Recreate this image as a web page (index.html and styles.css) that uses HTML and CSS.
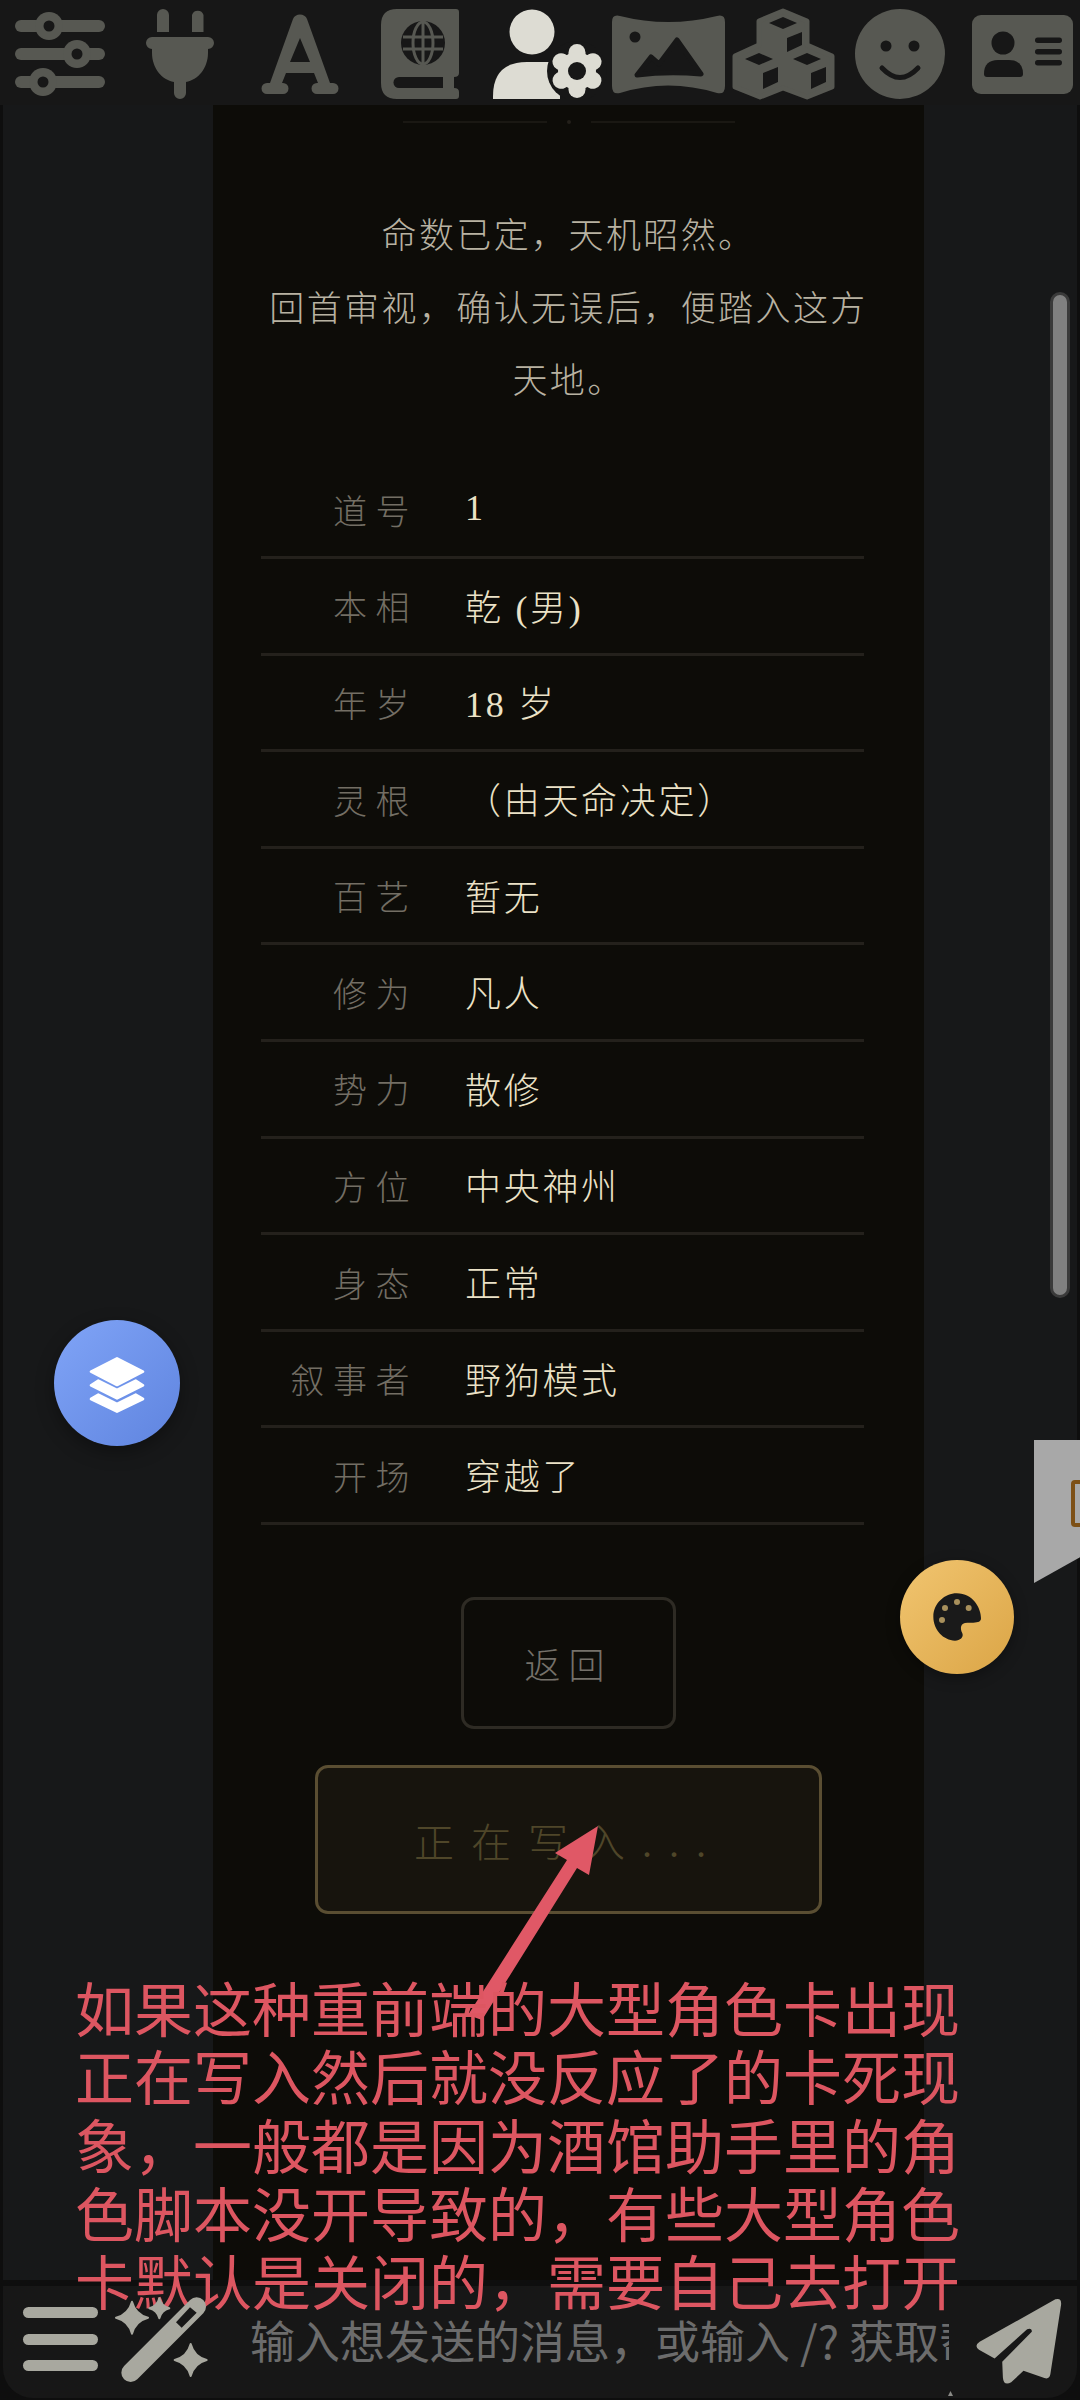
FILE: index.html
```html
<!DOCTYPE html>
<html lang="zh-CN">
<head>
  <meta charset="UTF-8">
  <meta name="viewport" content="width=device-width, initial-scale=1.0">
  <title>确认</title>
  <link rel="stylesheet" href="styles.css">
</head>
<body>
  <div class="app">

    <!-- top icon bar, every svg uses page pixels in its viewBox -->
    <nav class="topbar">
      <svg class="icon" width="125" height="105" viewBox="0 0 125 105">
        <rect x="15" y="20" width="90" height="12" rx="6"/>
        <rect x="15" y="48" width="90" height="12" rx="6"/>
        <rect x="15" y="76" width="90" height="12" rx="6"/>
        <circle cx="49" cy="26" r="14"/><circle cx="77" cy="54" r="14"/><circle cx="43" cy="82" r="14"/>
        <circle class="cut" cx="49" cy="26" r="5.5"/><circle class="cut" cx="77" cy="54" r="5.5"/><circle class="cut" cx="43" cy="82" r="5.5"/>
      </svg>
      <svg class="icon" width="112" height="105" viewBox="125 0 112 105">
        <path d="M157 15a6 6 0 0 1 12 0v17h-12zM192 15a6 6 0 0 1 11.500 0v17H192zM152 37h56h0a5.800 5.800 0 0 1 0 12v4c0 15-10 27-22 29v11a6 6 0 0 1-12 0V82c-12-2-22-14-22-29v-4a5.800 5.800 0 0 1 0-12z"/>
      </svg>
      <svg class="icon" width="123" height="105" viewBox="237 0 123 105">
        <path fill-rule="evenodd" d="M293 19C295 13 305 13 307 19L330 83H333A5.500 5.500 0 0 1 333 94H317A5.500 5.500 0 0 1 317 83H318L314 73H286L282 83H283A5.500 5.500 0 0 1 283 94H267A5.500 5.500 0 0 1 267 83H270ZM300 38L290 62H310Z"/>
      </svg>
      <svg class="icon" width="116" height="105" viewBox="360 0 116 105">
        <path d="M397 9H456Q459 9 459 12V73Q459 77 454 77V88Q459 88 459 92V96Q459 99 456 99H397Q381 99 381 83V25Q381 9 397 9Z"/>
        <path class="cut" d="M399 77H443V88H399A5.500 5.500 0 0 1 399 77Z"/>
        <circle class="cut" cx="423" cy="43" r="22"/>
        <g class="globe">
          <ellipse cx="423" cy="43" rx="10" ry="21"/>
          <path d="M423 22V64M403 37H443M403 49H443"/>
        </g>
      </svg>
      <svg class="icon active" width="132" height="105" viewBox="476 0 132 105">
        <circle cx="532" cy="32" r="22.500"/>
        <path d="M493 99V96Q493 62 527 62H560V99Z"/>
        <circle class="cut" cx="577" cy="71" r="30"/>
        <path class="cut" d="M560 99h30v6h-30z"/>
        <g class="gear">
          <line x1="577" y1="52.500" x2="577" y2="89.500"/>
          <line x1="561" y1="61.700" x2="593" y2="80.300"/>
          <line x1="561" y1="80.300" x2="593" y2="61.700"/>
        </g>
        <circle cx="577" cy="71" r="19"/>
        <circle class="cut" cx="577" cy="71" r="9"/>
      </svg>
      <svg class="icon" width="121" height="105" viewBox="608 0 121 105">
        <path d="M612 22Q612 14 620 16Q668 28 717 16Q725 14 725 22V86Q725 95 717 93Q668 78 620 93Q612 95 612 86Z"/>
        <circle class="cut" cx="635" cy="37" r="5.500"/>
        <path class="cut rounded" d="M677 40L701 74Q668 71 637 75L651 57L659 64Z"/>
      </svg>
      <svg class="icon" width="116" height="105" viewBox="729 0 116 105">
        <path class="rounded" d="M783 11L807 21V45L832 56V87L807 97L783 88L760 97L735 87V56L759 45V21Z"/>
        <path class="cut" d="M783 17L797 23L783 29L769 23ZM759 53L773 59L759 65L745 59ZM807 53L821 59L807 65L793 59ZM787 38L802 32V45L787 52ZM763 73L778 67V82L763 89ZM811 73L826 67V82L811 89Z"/>
      </svg>
      <svg class="icon" width="113" height="105" viewBox="845 0 113 105">
        <circle cx="900" cy="54" r="45"/>
        <circle class="cut" cx="886" cy="46" r="5.500"/><circle class="cut" cx="914" cy="46" r="5.500"/>
        <path class="smile" d="M882 68Q900 87 918 68"/>
      </svg>
      <svg class="icon" width="122" height="105" viewBox="958 0 122 105">
        <rect x="972" y="15" width="101" height="79" rx="9"/>
        <circle class="cut" cx="1003" cy="43" r="11.500"/>
        <path class="cut" d="M984 74Q984 60 998 60H1009Q1023 60 1023 74Q1023 77 1020 77H987Q984 77 984 74Z"/>
        <rect class="cut" x="1035" y="37.500" width="27" height="5.500" rx="2.700"/>
        <rect class="cut" x="1035" y="49" width="27" height="5.500" rx="2.700"/>
        <rect class="cut" x="1035" y="60" width="27" height="5.500" rx="2.700"/>
      </svg>
    </nav>

    <main class="chat">
      <section class="panel">
        <div class="ornament"><span class="orn-line"></span><span class="orn-dot"></span><span class="orn-line"></span></div>

        <p class="intro">命数已定，天机昭然。<br>回首审视，确认无误后，便踏入这方天地。</p>

        <div class="summary">
          <div class="row"><span class="label">道号</span><span class="value">1</span></div>
          <div class="row"><span class="label">本相</span><span class="value">乾 (男)</span></div>
          <div class="row"><span class="label">年岁</span><span class="value">18 岁</span></div>
          <div class="row"><span class="label">灵根</span><span class="value">（由天命决定）</span></div>
          <div class="row"><span class="label">百艺</span><span class="value">暂无</span></div>
          <div class="row"><span class="label">修为</span><span class="value">凡人</span></div>
          <div class="row"><span class="label">势力</span><span class="value">散修</span></div>
          <div class="row"><span class="label">方位</span><span class="value">中央神州</span></div>
          <div class="row"><span class="label">身态</span><span class="value">正常</span></div>
          <div class="row"><span class="label">叙事者</span><span class="value">野狗模式</span></div>
          <div class="row"><span class="label">开场</span><span class="value">穿越了</span></div>
        </div>

        <button class="btn-back">返回</button>
        <button class="btn-write">正在写入...</button>
      </section>
    </main>

    <footer class="composer">
      <div class="burger"><span></span><span></span><span></span></div>
      <svg class="wand" width="100" height="100" viewBox="345 90 300 300">
        <line class="wand-body" x1="392" y1="338" x2="590" y2="140"/>
        <path class="wand-slot" d="M528 187L570 142L590 158L545 203Z"/>
        <path class="wand-star" d="M396 125Q406 163 444 173Q406 183 396 221Q386 183 348 173Q386 163 396 125Z"/>
        <path class="wand-star" d="M478 115Q484 139 508 145Q484 151 478 175Q472 151 448 145Q472 139 478 115Z"/>
        <path class="wand-star" d="M572 252Q582 290 620 300Q582 310 572 348Q562 310 524 300Q562 290 572 252Z"/>
      </svg>
      <div class="placeholder">输入想发送的消息，或输入 /? 获取帮助</div>
      <svg class="send" width="93" height="93" viewBox="280 100 280 280">
        <path d="M528 110Q548 104 545 128L513 335Q510 352 495 347L432 325L395 360Q372 372 370 345L368 298L457 208Q458 195 443 200L345 288L298 262Q282 250 300 238Z"/>
      </svg>
      <span class="resize-mark"></span>
    </footer>
  </div>

  <!-- floating things over the page -->
  <div class="scrollbar"></div>

  <button class="fab fab-blue">
    <svg width="126" height="126" viewBox="72 60 378 378">
      <path class="layers" d="M261 175L339 215L261 255L183 215ZM205 242L261 270L317 242L339 256L261 295L183 256ZM205 284L261 312L317 284L339 297L261 335L183 297Z"/>
    </svg>
  </button>

  <button class="fab fab-gold">
    <svg width="114" height="114" viewBox="60 420 342 342">
      <path class="palette" d="M230 520C280 520 303 565 303 595C303 605 295 608 280 608H262C240 608 240 625 247 640C252 652 240 662 225 662C190 660 160 630 160 590C160 550 195 520 230 520Z"/>
      <circle class="palette-dot" cx="195" cy="564" r="9"/><circle class="palette-dot" cx="231" cy="546" r="9"/>
      <circle class="palette-dot" cx="266" cy="564" r="9"/><circle class="palette-dot" cx="186" cy="600" r="9"/>
    </svg>
  </button>

  <div class="side-tab"><span class="side-tab-icon"></span></div>

  <svg class="arrow" width="150" height="210" viewBox="460 1820 150 210">
    <path d="M598 1826L555 1853L567 1860L468 2015L482 2020L577 1868L589 1875Z"/>
  </svg>

  <p class="note">如果这种重前端的大型角色卡出现正在写入然后就没反应了的卡死现象，一般都是因为酒馆助手里的角色脚本没开导致的，有些大型角色卡默认是关闭的，需要自己去打开</p>
</body>
</html>
```

FILE: styles.css
```css
* {
  box-sizing: border-box;
}

body {
  margin: 0;
  width: 1080px;
  height: 2400px;
  overflow: hidden;
  position: relative;
  background-color: #0e0e0e;
  font-family: "Liberation Serif", "Noto Sans CJK SC", sans-serif;
}

.app {
  display: flex;
  flex-direction: column;
  height: 2400px;
}

/* top bar */
.topbar {
  display: flex;
  flex: none;
  height: 105px;
  background-color: #171717;
}

.icon {
  flex: none;
  fill: #575852;
}

.icon.active {
  fill: #dddcd3;
}

.icon .cut {
  fill: #171717;
}

.icon .rounded {
  stroke-linejoin: round;
  stroke-width: 5;
  stroke: #575852;
}

.icon .cut.rounded {
  stroke: #171717;
}

.globe {
  fill: none;
  stroke: #575852;
  stroke-width: 3;
}

.gear {
  stroke: #dddcd3;
  stroke-width: 17;
  stroke-linecap: round;
}

.smile {
  fill: none;
  stroke: #171717;
  stroke-width: 5;
  stroke-linecap: round;
}

/* main area */
.chat {
  flex: 1;
  min-height: 0;
  margin: 0 3px;
  padding-left: 210px;
  background-color: #171819;
  overflow: hidden;
}

.panel {
  display: flex;
  flex-direction: column;
  align-items: center;
  width: 711px;
  height: 100%;
  padding: 15px 48px 0;
  background-color: #0d0c08;
}

.ornament {
  display: flex;
  align-items: center;
  gap: 20px;
  height: 3px;
}

.orn-line {
  width: 144px;
  height: 2px;
  background-color: #1a1813;
}

.orn-dot {
  width: 4px;
  height: 4px;
  border-radius: 50%;
  background-color: #23201a;
}

.intro {
  margin: 0;
  padding-top: 78px;
  width: 100%;
  text-align: center;
  font-size: 35px;
  font-weight: 300;
  line-height: 72.500px;
  letter-spacing: 2.400px;
  color: #b8b2a2;
}

/* summary table */
.summary {
  align-self: flex-start;
  width: 603px;
  margin-top: 44px;
}

.row {
  display: grid;
  grid-template-columns: 157px 1fr;
  column-gap: 47px;
  align-items: center;
  height: 96.600px;
  border-bottom: 3px solid #24211c;
}

.label {
  text-align: right;
  font-size: 34px;
  font-weight: 300;
  letter-spacing: 8.500px;
  color: #736e64;
}

.value {
  margin-top: -2px;
  font-size: 36px;
  font-weight: 300;
  letter-spacing: 2.700px;
  color: #ebe2c7;
}

/* buttons */
.btn-back,
.btn-write {
  display: block;
  flex: none;
  font-family: inherit;
  font-weight: 300;
  border-radius: 13px;
  border-style: solid;
  border-width: 3px;
}

.btn-back {
  width: 215px;
  height: 132px;
  margin-top: 72px;
  font-size: 36px;
  letter-spacing: 8px;
  color: #75716a;
  background-color: transparent;
  border-color: #2e2b24;
}

.btn-write {
  width: 507px;
  height: 149px;
  margin-top: 36px;
  font-size: 40px;
  letter-spacing: 17px;
  color: #4f4629;
  background-color: #17140d;
  border-color: #5a4e32;
}

/* composer */
.composer {
  display: flex;
  flex: none;
  align-items: center;
  position: relative;
  height: 112px;
  margin: 6px 3px 2px;
  padding-left: 20px;
  background-color: #171717;
  border-radius: 0 0 30px 30px;
}

.burger {
  display: flex;
  flex-direction: column;
  gap: 15.500px;
  width: 75px;
  margin-top: -6px;
  margin-right: 17px;
}

.burger span {
  height: 11px;
  border-radius: 6px;
  background-color: #a8a89f;
}

.wand {
  flex: none;
  position: relative;
  z-index: 6;
  margin-top: -5px;
}

.wand-body {
  stroke: #a8a89f;
  stroke-width: 56;
  stroke-linecap: round;
}

.wand-slot {
  fill: #171717;
}

.wand-star {
  fill: #a8a89f;
  stroke: #a8a89f;
  stroke-width: 6;
  stroke-linejoin: round;
}

.placeholder {
  flex: none;
  width: 699px;
  margin-left: 35px;
  margin-top: -5px;
  overflow: hidden;
  white-space: nowrap;
  font-family: "Noto Sans CJK SC", sans-serif;
  font-size: 45px;
  color: #6c6c6c;
}

.send {
  flex: none;
  margin-left: 24px;
  fill: #a8a89f;
}

.resize-mark {
  position: absolute;
  left: 945px;
  bottom: 2px;
  width: 5px;
  height: 5px;
  background-color: #8a8a86;
  clip-path: polygon(50% 0, 100% 100%, 0 100%);
}

/* overlays */
.scrollbar {
  position: absolute;
  left: 1050px;
  top: 292px;
  width: 20px;
  height: 1006px;
  border: 3px solid #3a3a3a;
  border-radius: 10px;
  background-color: #808080;
}

.fab {
  position: absolute;
  display: block;
  padding: 0;
  border: none;
  border-radius: 50%;
}

.fab svg {
  display: block;
}

.fab-blue {
  left: 54px;
  top: 1320px;
  width: 126px;
  height: 126px;
  background: linear-gradient(135deg, #80a4f7, #5f84df);
  box-shadow: 0 6px 18px rgba(0, 0, 0, 0.35);
}

.layers {
  fill: #fff;
  stroke: #fff;
  stroke-width: 8;
  stroke-linejoin: round;
}

.fab-gold {
  left: 900px;
  top: 1560px;
  width: 114px;
  height: 114px;
  background: linear-gradient(135deg, #f1c570, #dba546);
  box-shadow: 0 4px 14px rgba(0, 0, 0, 0.35);
}

.palette {
  fill: #1a1a1a;
}

.palette-dot {
  fill: #a8905c;
}

.side-tab {
  position: absolute;
  left: 1034px;
  top: 1440px;
  width: 46px;
  height: 143px;
  overflow: hidden;
  background-color: #a8a8a8;
  clip-path: polygon(0 0, 100% 0, 100% 82%, 0 100%);
}

.side-tab-icon {
  position: absolute;
  left: 37px;
  top: 40px;
  width: 30px;
  height: 47px;
  border: 4px solid #7d5016;
  border-radius: 4px;
}

.arrow {
  position: absolute;
  left: 460px;
  top: 1820px;
  z-index: 5;
  fill: #e05866;
}

.note {
  position: absolute;
  left: 75px;
  top: 1973px;
  z-index: 5;
  width: 890px;
  margin: 0;
  font-family: "Noto Sans CJK SC", sans-serif;
  font-size: 59px;
  line-height: 68.300px;
  color: #dd5661;
}
```
